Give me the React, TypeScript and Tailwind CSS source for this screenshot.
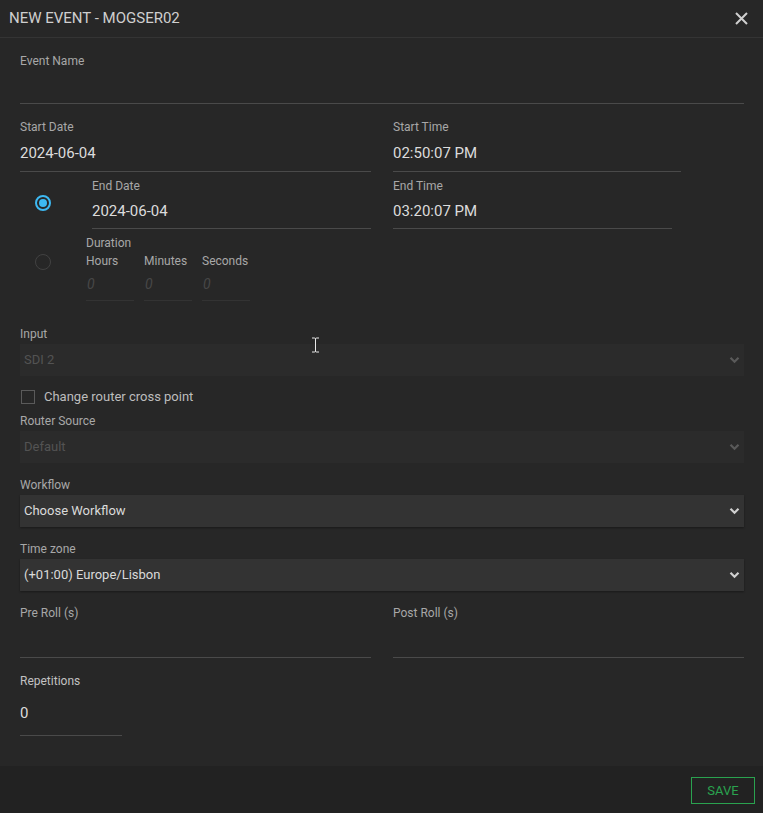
import React from 'react';

function Label({ children, className = '' }: { children: React.ReactNode; className?: string }) {
  return <div className={`text-[12px] leading-4 text-[#a8a8a8] ${className}`}>{children}</div>;
}

function LineInput({ value, className = '' }: { value?: string; className?: string }) {
  return (
    <div className={`flex items-center border-b border-[#4a4a4a] text-[15px] text-[#dcdcdc] ${className}`}>
      {value}
    </div>
  );
}

function Chevron({ dim }: { dim?: boolean }) {
  return (
    <svg width="11" height="8" viewBox="0 0 11 8" className="shrink-0">
      <path d="M1.5 1.8 L5.5 5.8 L9.5 1.8" fill="none" stroke={dim ? '#5a5a5a' : '#d0d0d0'} strokeWidth="2.2" />
    </svg>
  );
}

function Select({ value, disabled }: { value: string; disabled?: boolean }) {
  return (
    <div
      className={`flex h-8 items-center justify-between pl-1 pr-[4px] text-[13px] ${
        disabled ? 'bg-[#2b2b2b] text-[#535353]' : 'bg-[#333333] text-[#dadada] shadow-[0_1px_2px_rgba(0,0,0,0.35)]'
      }`}
    >
      <span>{value}</span>
      <Chevron dim={disabled} />
    </div>
  );
}

function Radio({ checked }: { checked?: boolean }) {
  if (checked) {
    return (
      <div className="flex h-4 w-4 items-center justify-center rounded-full border-2 border-[#3db9f2]">
        <div className="h-[8px] w-[8px] rounded-full bg-[#3db9f2]" />
      </div>
    );
  }
  return <div className="h-4 w-4 rounded-full border-[1.5px] border-[#424242]" />;
}

export default function App() {
  return (
    <div className="relative flex h-[813px] w-[763px] flex-col bg-[#272727] font-['Roboto','Liberation_Sans',sans-serif]">
      {/* Header */}
      <div className="flex h-[38px] shrink-0 items-center justify-between border-b border-[#343434] pl-[9px] pr-[15px]">
        <div className="text-[15px] leading-none text-[#cfcfcf]">NEW EVENT - MOGSER02</div>
        <svg width="13" height="13" viewBox="0 0 13 13">
          <path d="M1 1 L12 12 M12 1 L1 12" stroke="#cfcfcf" strokeWidth="2" />
        </svg>
      </div>

      {/* Body */}
      <div className="flex flex-1 flex-col pl-5 pr-[19px] pt-[15px]">
        <Label>Event Name</Label>
        <LineInput className="h-[35px]" />

        <div className="mt-[15px] grid grid-cols-2 gap-x-[22px]">
          <div className="flex flex-col">
            <Label>Start Date</Label>
            <LineInput value="2024-06-04" className="h-[37px]" />

            <div className="mt-[6px] flex">
              <div className="flex w-[72px] items-center justify-start pl-[15px] pb-[2px]">
                <Radio checked />
              </div>
              <div className="flex flex-1 flex-col">
                <Label>End Date</Label>
                <LineInput value="2024-06-04" className="h-[35px]" />
              </div>
            </div>
          </div>

          <div className="flex flex-col">
            <Label>Start Time</Label>
            <LineInput value="02:50:07 PM" className="h-[37px] w-[288px]" />
            <Label className="mt-[6px]">End Time</Label>
            <LineInput value="03:20:07 PM" className="h-[35px] w-[279px]" />
          </div>
        </div>

        {/* Duration */}
        <div className="mt-[6px] flex">
          <div className="flex w-[66px] items-start pl-[15px] pt-[19px]">
            <Radio />
          </div>
          <div className="flex flex-col">
            <Label className="text-[#5a5a5a]">Duration</Label>
            <div className="mt-[2px] flex gap-[10px]">
              {['Hours', 'Minutes', 'Seconds'].map((u) => (
                <div key={u} className="flex w-[48px] flex-col">
                  <Label className="text-[#5a5a5a]">{u}</Label>
                  <div className="flex h-[32px] items-center border-b border-[#333333] pl-[1px] text-[14px] italic text-[#474747]">
                    0
                  </div>
                </div>
              ))}
            </div>
          </div>
        </div>

        {/* Input */}
        <Label className="mt-[25px] text-[#686868]">Input</Label>
        <div className="mt-[2px]">
          <Select value="SDI 2" disabled />
        </div>

        <div className="mt-[8px] flex h-[26px] items-center">
          <div className="ml-[1px] h-[14px] w-[14px] border border-[#5a5a5a]" />
          <span className="ml-[9px] text-[13px] text-[#bdbdbd]">Change router cross point</span>
        </div>

        <Label className="mt-[3px] text-[#686868]">Router Source</Label>
        <div className="mt-[2px]">
          <Select value="Default" disabled />
        </div>

        <Label className="mt-[14px]">Workflow</Label>
        <div className="mt-[2px]">
          <Select value="Choose Workflow" />
        </div>

        <Label className="mt-[14px]">Time zone</Label>
        <div className="mt-[2px]">
          <Select value="(+01:00) Europe/Lisbon" />
        </div>

        <div className="mt-[14px] grid grid-cols-2 gap-x-[22px]">
          <div className="flex flex-col">
            <Label>Pre Roll (s)</Label>
            <LineInput className="h-[37px]" />
          </div>
          <div className="flex flex-col">
            <Label>Post Roll (s)</Label>
            <LineInput className="h-[37px]" />
          </div>
        </div>

        <Label className="mt-[15px] text-[#c2c2c2]">Repetitions</Label>
        <LineInput value="0" className="mt-[8px] h-[39px] w-[102px] pb-[5px]" />
      </div>

      {/* Footer */}
      <div className="flex h-[47px] shrink-0 items-start justify-end bg-[#222222] pr-2 pt-[11px]">
        <button className="flex h-[27px] w-[64px] items-center justify-center border border-[#2aa24f] pt-[1px] text-[13px] text-[#2aa24f]">
          SAVE
        </button>
      </div>

      {/* mouse cursor */}
      <svg className="absolute left-[311px] top-[337px]" width="9" height="16" viewBox="0 0 9 16">
        <path d="M1 1 H3.5 Q4.5 1 4.5 2 V14 Q4.5 15 3.5 15 H1 M8 1 H5.5 Q4.5 1 4.5 2 M4.5 14 Q4.5 15 5.5 15 H8" fill="none" stroke="#e8e8e8" strokeWidth="1" />
      </svg>
    </div>
  );
}
